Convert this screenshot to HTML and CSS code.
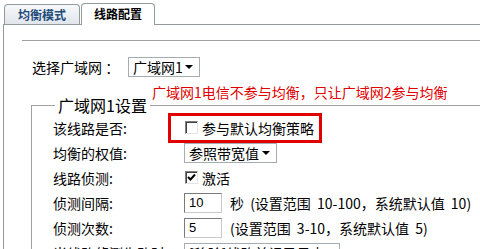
FILE: index.html
```html
<!DOCTYPE html>
<html lang="zh-CN">
<head>
    <meta charset="UTF-8">
    <title>线路配置</title>
    <link rel="stylesheet" href="styles.css">
</head>
<body>
    <div class="tabs">
        <div class="tab">均衡模式</div>
        <div class="tab active">线路配置</div>
    </div>

    <div class="panel">
        <div class="rule"></div>

        <div class="wan-row">
            <span class="wan-label">选择广域网 ：</span>
            <div class="select wan-select"><span>广域网1</span><i class="arrow"></i></div>
        </div>

        <div class="note">广域网1电信不参与均衡，只让广域网2参与均衡</div>

        <fieldset class="group">
            <legend>广域网1设置</legend>

            <div class="row">
                <span class="label">该线路是否:</span>
                <span class="check"></span><span>参与默认均衡策略</span>
                <div class="mark"></div>
            </div>

            <div class="row">
                <span class="label">均衡的权值:</span>
                <div class="select weight-select"><span>参照带宽值</span><i class="arrow"></i></div>
            </div>

            <div class="row">
                <span class="label">线路侦测:</span>
                <span class="check checked"><svg width="9" height="9" viewBox="0 0 9 9"><path d="M1 4 L3.5 6.5 L8 1.5" fill="none" stroke="#000" stroke-width="2"/></svg></span><span>激活</span>
            </div>

            <div class="row">
                <span class="label">侦测间隔:</span>
                <div class="field">10</div>
                <span class="hint">秒 (设置范围 10-100，系统默认值 10)</span>
            </div>

            <div class="row">
                <span class="label">侦测次数:</span>
                <div class="field">5</div>
                <span class="hint">(设置范围 3-10，系统默认值 5)</span>
            </div>

            <div class="row">
                <span class="label">当线路侦测失败时:</span>
                <div class="select fail-select"><span>[移除]线路并记录日志</span><i class="arrow"></i></div>
            </div>
        </fieldset>
    </div>
</body>
</html>
```

FILE: styles.css
```css
* {
    margin: 0;
    padding: 0;
    box-sizing: border-box;
}

body {
    font-family: "Noto Sans CJK SC", "DejaVu Sans", sans-serif;
    font-size: 14px;
    color: #000;
    background: #fff;
    width: 480px;
    height: 249px;
    overflow: hidden;
}

/* tab strip */
.tabs {
    display: flex;
    align-items: flex-end;
    gap: 1px;
    height: 24px;
    padding-left: 4px;
}

.tab {
    width: 76px;
    height: 20px;
    border: 1px solid #919b9c;
    border-bottom: none;
    border-radius: 4px 4px 0 0;
    background: linear-gradient(#f7f8fa, #e1e6ec);
    color: #1f4a7c;
    font-size: 12px;
    font-weight: bold;
    line-height: 19px;
    text-align: center;
}

.tab.active {
    width: 74px;
    height: 22px;
    margin-bottom: -1px;
    background: #fff;
    color: #000;
    position: relative;
    z-index: 1;
}

/* panel */
.panel {
    width: 700px;
    margin-left: 3px;
    padding-top: 15px;
    border-top: 1px solid #919b9c;
    border-left: 1px solid #919b9c;
}

.rule {
    margin-left: 18px;
    border-top: 1px solid #a0a0a0;
}

.wan-row {
    display: flex;
    align-items: center;
    height: 20px;
    margin-top: 16px;
    padding-left: 28px;
}

.wan-label {
    width: 96px;
}

.note {
    margin: 5px 0 0 148px;
    line-height: 20px;
    color: #e00000;
}

/* group box */
.group {
    margin: -7px 0 0 27px;
    padding: 0 0 0 21px;
    border: 1px solid #a0a0a0;
}

.group legend {
    margin-left: 2px;
    padding: 0 3px;
    font-size: 16px;
    line-height: 20px;
}

.row {
    display: flex;
    align-items: center;
    height: 25px;
    position: relative;
}

.label {
    width: 131px;
}

/* controls */
.select {
    height: 20px;
    display: flex;
    align-items: center;
    justify-content: space-between;
    padding: 0 6px 0 4px;
    border: 1px solid #a5acb2;
    background: #fff;
}

.wan-select {
    width: 72px;
}

.weight-select {
    width: 93px;
}

.fail-select {
    width: 156px;
}

.arrow {
    width: 0;
    height: 0;
    border-left: 4px solid transparent;
    border-right: 4px solid transparent;
    border-top: 4px solid #000;
}

.check {
    width: 13px;
    height: 13px;
    margin: 0 4px 0 1px;
    display: flex;
    align-items: center;
    justify-content: center;
    border: 1px solid;
    border-color: #808080 #e4e4e4 #e4e4e4 #808080;
    box-shadow: inset 1px 1px 0 #404040;
    background: #fff;
}

.field {
    width: 38px;
    height: 20px;
    padding-left: 4px;
    border: 1px solid;
    border-color: #7a7a7a #c8c8c8 #c8c8c8 #7a7a7a;
    font-family: "Liberation Sans", Arial, sans-serif;
    font-size: 13px;
    line-height: 18px;
}

.hint {
    margin-left: 8px;
    word-spacing: 3px;
}

/* red annotation box */
.mark {
    position: absolute;
    left: 115px;
    top: -2px;
    width: 154px;
    height: 30px;
    border: 3px solid #e00000;
}
```
